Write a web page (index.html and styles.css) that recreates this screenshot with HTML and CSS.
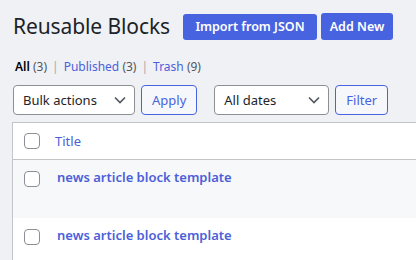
FILE: index.html
```html
<!DOCTYPE html>
<html lang="en">
<head>
  <meta charset="utf-8" />
  <title>Reusable Blocks</title>
  <meta name="viewport" content="width=device-width, initial-scale=1" />
  <link rel="stylesheet" href="styles.css">
</head>
<body>
  <main class="wrap">
    <!-- page header -->
    <header class="page-head">
      <h1>Reusable Blocks</h1>
      <a class="btn-primary btn-import" href="">Import from JSON</a>
      <a class="btn-primary btn-add" href="">Add New</a>
    </header>

    <ul class="views">
      <li class="current">All <span class="count">(3)</span></li>
      <li class="sep">|</li>
      <li><a href="">Published</a> <span class="count">(3)</span></li>
      <li class="sep">|</li>
      <li><a href="">Trash</a> <span class="count">(9)</span></li>
    </ul>

    <!-- filters -->
    <div class="tablenav">
      <div class="select select-bulk">
        <span>Bulk actions</span>
        <svg width="12" height="8" viewBox="0 0 12 8"><polyline points="1,1.5 6,6.5 11,1.5" fill="none" stroke="#50575e" stroke-width="1.6"/></svg>
      </div>
      <button class="btn-outline">Apply</button>
      <div class="select select-dates">
        <span>All dates</span>
        <svg width="12" height="8" viewBox="0 0 12 8"><polyline points="1,1.5 6,6.5 11,1.5" fill="none" stroke="#50575e" stroke-width="1.6"/></svg>
      </div>
      <button class="btn-outline">Filter</button>
    </div>

    <!-- list -->
    <section class="list">
      <div class="list-head">
        <input type="checkbox" class="cb" />
        <a href="">Title</a>
      </div>
      <div class="row alt">
        <input type="checkbox" class="cb" />
        <a class="row-title" href="">news article block template</a>
      </div>
      <div class="row">
        <input type="checkbox" class="cb" />
        <a class="row-title" href="">news article block template</a>
      </div>
    </section>
  </main>
</body>
</html>
```

FILE: styles.css
```css
:root{
  --blue:#4763df;
  --link:#4c5fd9;
  --ink:#1d2327;
  --muted:#50575e;
  --line:#c3c4c7;
  --bg:#f0f1f5;
}

*{box-sizing:border-box;margin:0;padding:0}
html,body{overflow:hidden}
body{
  font-family:'Noto Sans','Open Sans',Arial,sans-serif;
  background:var(--bg);color:var(--ink);
  font-size:12px;
}
a{text-decoration:none;color:var(--link)}

.wrap{padding:12px 0 0 12px}

/* —— header —— */
.page-head{display:flex;align-items:center;gap:4px;height:29px;white-space:nowrap}
.page-head h1{font-size:21px;font-weight:400;line-height:1.3;margin:0 9px 0 1px;color:var(--ink);letter-spacing:-0.1px}
.btn-primary{
  display:inline-flex;align-items:center;justify-content:center;flex:none;
  height:26px;border-radius:3px;
  background:var(--blue);color:#fff;font-weight:600;font-size:12.5px;
}
.btn-import{width:134px}
.btn-add{width:72px;height:27px;margin-top:-1px}

.views{display:flex;list-style:none;gap:5px;margin:16px 0 0 3px;line-height:20px;font-size:12px;white-space:nowrap}
.views .current{font-weight:600;color:#000}
.views .count{font-weight:400;color:var(--muted)}
.views .sep{color:#a7aaad}

/* —— filters —— */
.tablenav{display:flex;align-items:center;margin:8px 0 0 1px;height:30px;white-space:nowrap}
.select{
  display:flex;align-items:center;justify-content:space-between;flex:none;
  height:30px;padding:0 8px 0 9px;background:#fff;
  border:1px solid #8c8f94;border-radius:4px;font-size:13px;color:var(--ink);
}
.select-bulk{width:122px}
.select-dates{width:115px;margin-left:17px}
.btn-outline{
  height:30px;margin-left:6px;padding:0 10px;border:1px solid var(--blue);border-radius:4px;flex:none;
  background:#f6f7fb;color:var(--blue);font-family:inherit;font-size:13px;cursor:pointer;
}

/* —— list —— */
.list{margin-top:7px;width:480px;background:#fff;border:1px solid var(--line)}
.list-head,.row{display:flex;align-items:flex-start;padding:10px 0 0 11px;gap:15px;white-space:nowrap}
.list-head{height:37px;border-bottom:1px solid var(--line);font-size:13px;line-height:16px}
.row{height:58px;padding-top:11px;font-size:13px;line-height:13px}
.row.alt{background:#f7f8fa}
.row .row-title{font-weight:600;margin-left:2px}
.cb{
  appearance:none;-webkit-appearance:none;flex:none;
  width:16px;height:16px;border:1px solid #8c8f94;border-radius:4px;background:#fff;
}
```
